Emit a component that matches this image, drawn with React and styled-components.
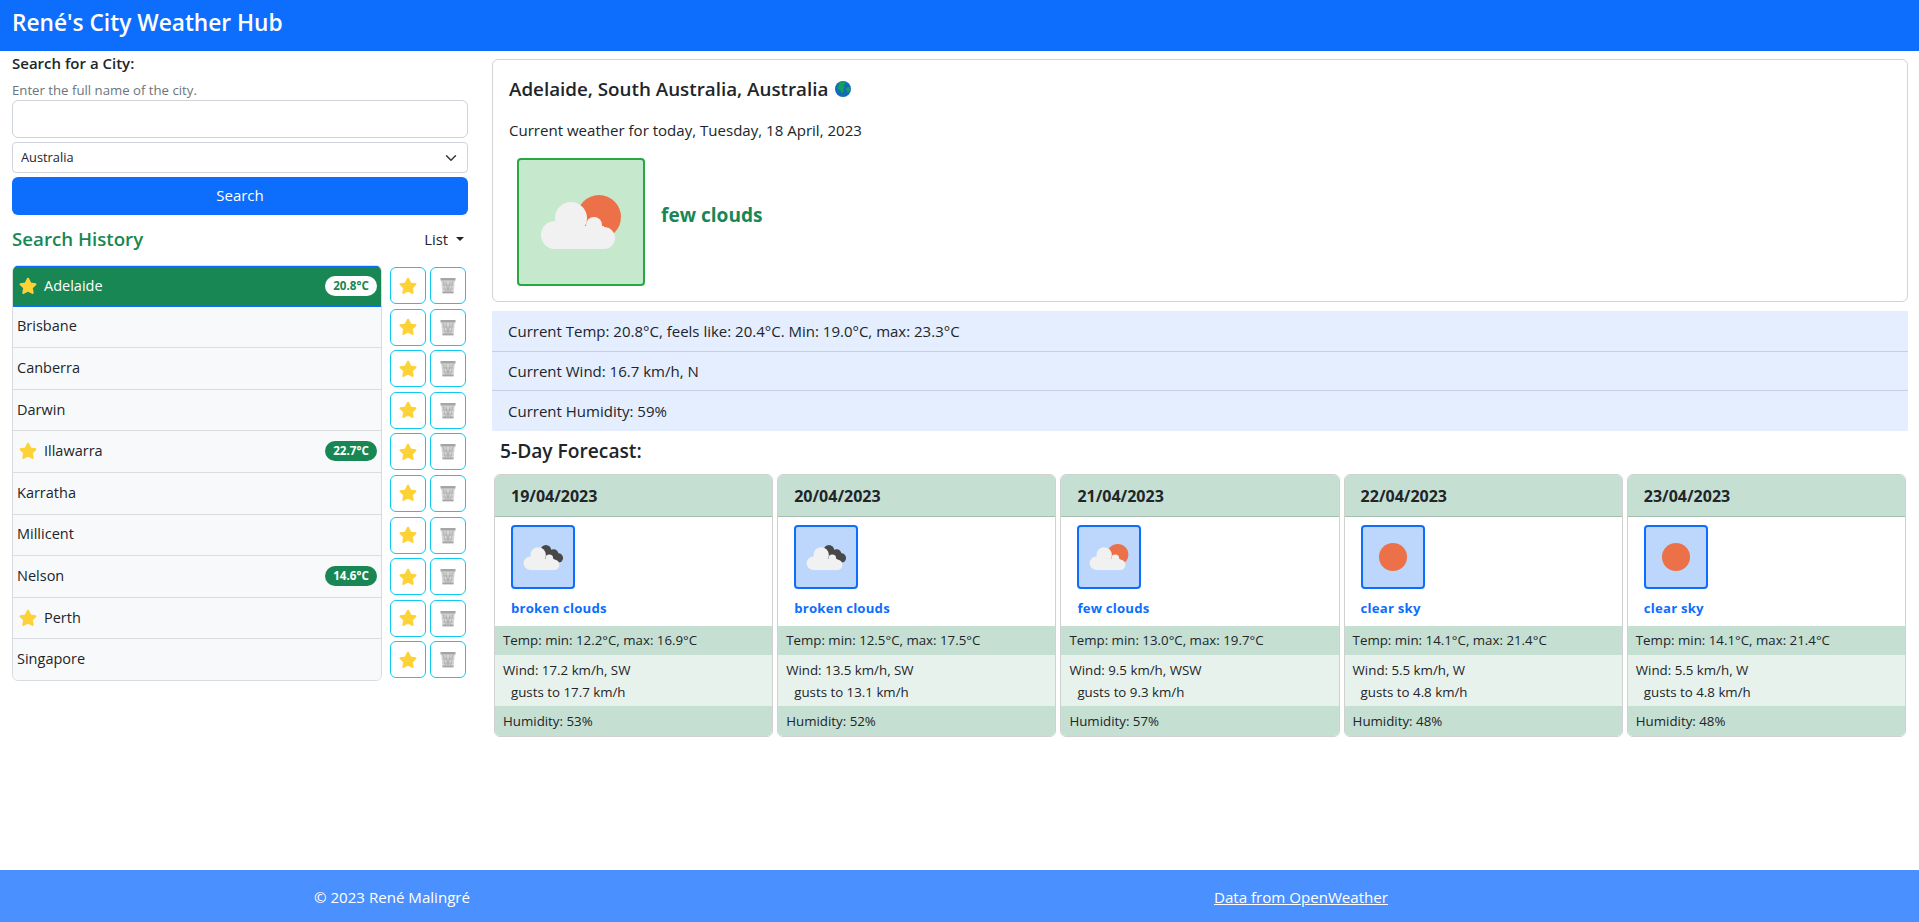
import styled, { createGlobalStyle } from 'styled-components';

const GlobalStyle = createGlobalStyle`
  html, body {
    margin: 0;
    padding: 0;
    background: #fff;
    color: #212529;
    font-family: "Open Sans", "Noto Sans", "Liberation Sans", sans-serif;
    font-size: 16px;
    line-height: 24px;
  }
  * { box-sizing: border-box; }
`;

const Page = styled.div`
  height: 922px;
  display: flex;
  flex-direction: column;
  overflow: hidden;
`;

const Header = styled.header`
  height: 51px;
  flex: none;
  background: #0d6efd;
  color: #fff;
  padding: 0 12px 5px;
  display: flex;
  align-items: center;
  font-size: 22.7px;
  font-weight: 600;
`;

const Main = styled.main`
  flex: 1;
  display: grid;
  grid-template-columns: 480px 1439px;
`;

const Sidebar = styled.section`
  padding: 0 12px;
`;

const FieldLabel = styled.div`
  font-size: 15px;
  font-weight: 600;
`;

const Hint = styled.div`
  margin-top: 5px;
  height: 20px;
  line-height: 20px;
  font-size: 13.2px;
  color: #6c757d;
`;

const CityInput = styled.input`
  display: block;
  width: 100%;
  height: 38px;
  border: 1px solid #ced4da;
  border-radius: 6px;
  background: #fff;
`;

const CountrySelect = styled.select`
  display: block;
  width: 100%;
  height: 31px;
  margin-top: 4px;
  padding: 0 36px 2px 8px;
  border: 1px solid #ced4da;
  border-radius: 4px;
  appearance: none;
  color: #212529;
  font-family: inherit;
  font-size: 12.8px;
  background: #fff url("data:image/svg+xml,%3csvg xmlns='http://www.w3.org/2000/svg' viewBox='0 0 16 16'%3e%3cpath fill='none' stroke='%23343a40' stroke-linecap='round' stroke-linejoin='round' stroke-width='2' d='m2 5 6 6 6-6'/%3e%3c/svg%3e") no-repeat right 8px center / 16px 12px;
`;

const SearchButton = styled.button`
  display: block;
  width: 100%;
  height: 38px;
  margin-top: 4px;
  padding: 0 0 2px;
  border: none;
  border-radius: 6px;
  background: #0d6efd;
  color: #fff;
  font-family: inherit;
  font-size: 15px;
`;

const HistoryBar = styled.div`
  margin-top: 12px;
  height: 24px;
  display: flex;
  align-items: center;
  justify-content: space-between;
`;

const HistoryTitle = styled.h2`
  margin: 0;
  color: #198754;
  font-size: 18.7px;
  font-weight: 600;
`;

const ListToggle = styled.div`
  display: flex;
  align-items: center;
  gap: 8px;
  padding-right: 4px;
  font-size: 14.8px;
  &::after {
    content: '';
    border-top: 4.8px solid #212529;
    border-left: 4.8px solid transparent;
    border-right: 4.8px solid transparent;
  }
`;

const HistoryGrid = styled.div`
  margin-top: 14px;
  display: grid;
  grid-template-columns: 370px 76px;
  column-gap: 8px;
  align-items: start;
`;

const CityList = styled.div`
  border: 1px solid #d9dcdf;
  border-radius: 6px;
  overflow: hidden;
`;

const CityRow = styled.div`
  height: 41.6px;
  display: flex;
  align-items: center;
  justify-content: space-between;
  padding: 0 4px 1px;
  font-size: 14.5px;
  background: ${({ $active }) => ($active ? '#198754' : '#f8f9fa')};
  color: ${({ $active }) => ($active ? '#fff' : '#212529')};
  border-top: ${({ $active }) => ($active ? '1px solid #0d6efd' : 'none')};
  border-bottom: 1px solid ${({ $active }) => ($active ? '#0d6efd' : '#dadde0')};
  &:first-child {
    height: 40.6px;
  }
  &:last-child {
    height: 40.6px;
    border-bottom: none;
  }
`;

const CityName = styled.span`
  display: flex;
  align-items: center;
  gap: 6px;
  padding-left: ${({ $starred }) => ($starred ? '1px' : '0')};
`;

const TempBadge = styled.span`
  height: 20px;
  width: 52px;
  display: flex;
  align-items: center;
  justify-content: center;
  border-radius: 10px;
  font-size: 11.6px;
  font-weight: 700;
  background: ${({ $active }) => ($active ? '#fff' : '#198754')};
  color: ${({ $active }) => ($active ? '#198754' : '#fff')};
`;

const ActionColumn = styled.div`
  display: flex;
  flex-direction: column;
`;

const ActionRow = styled.div`
  height: 41.6px;
  display: flex;
  gap: 4px;
  padding-top: 2px;
`;

const ActionButton = styled.button`
  width: 36px;
  height: 37px;
  padding: 0;
  display: flex;
  align-items: center;
  justify-content: center;
  border: 1px solid #0dcaf0;
  border-radius: 6px;
  background: #fff;
`;

const Content = styled.section`
  padding: 8px 11px 0 12px;
`;

const CurrentCard = styled.div`
  height: 243px;
  border: 1px solid #d3d4d5;
  border-radius: 6px;
  padding: 17px 16px 0;
`;

const CityTitle = styled.h1`
  margin: 0;
  display: flex;
  align-items: center;
  gap: 7px;
  font-size: 18.8px;
  font-weight: 600;
`;

const Subtitle = styled.p`
  margin: 17px 0 0;
  font-size: 15.05px;
`;

const ConditionRow = styled.div`
  margin: 16px 0 0 8px;
  display: flex;
  align-items: center;
  gap: 16px;
`;

const IconBox = styled.div`
  flex: none;
  width: ${({ $size }) => $size}px;
  height: ${({ $size }) => $size}px;
  border: 2px solid ${({ $variant }) => ($variant === 'success' ? '#28a745' : '#0d6efd')};
  border-radius: 4px;
  background: ${({ $variant }) => ($variant === 'success' ? '#c6e8cd' : '#bdd6fc')};
  svg {
    display: block;
    width: 100%;
    height: 100%;
  }
`;

const ConditionLabel = styled.div`
  margin-bottom: 15px;
  font-size: 19.1px;
  font-weight: 700;
  color: #198754;
`;

const StatsList = styled.div`
  margin-top: 9px;
  background: #e4eefe;
`;

const StatRow = styled.div`
  height: ${({ $height }) => $height}px;
  display: flex;
  align-items: center;
  padding: 0 16px;
  font-size: 15px;
  & + & {
    border-top: 1px solid #c6d0e2;
  }
`;

const ForecastTitle = styled.h3`
  margin: 8px 0 0 8px;
  height: 24px;
  font-size: 19.2px;
  font-weight: 600;
`;

const ForecastGrid = styled.div`
  margin-top: 11px;
  display: grid;
  grid-template-columns: repeat(5, 1fr);
`;

const DayCard = styled.article`
  margin: 0 2px;
  height: 263px;
  display: flex;
  flex-direction: column;
  border: 1px solid #cfd2d1;
  border-radius: 6px;
  overflow: hidden;
`;

const DayHeader = styled.div`
  height: 42px;
  flex: none;
  display: flex;
  align-items: center;
  padding-left: 16px;
  font-size: 16px;
  font-weight: 700;
  background: #c5e0d3;
  border-bottom: 1px solid #a6bdb2;
`;

const DayBody = styled.div`
  height: 109px;
  flex: none;
  padding: 8px 16px 0;
`;

const DayCondition = styled.div`
  margin-top: 7px;
  font-size: 13.2px;
  font-weight: 700;
  letter-spacing: 0.2px;
  color: #0d6efd;
`;

const DayStat = styled.div`
  height: ${({ $height }) => $height}px;
  display: flex;
  flex-direction: column;
  justify-content: center;
  padding: 0 8px ${({ $lift }) => ($lift ? '2px' : '0')};
  font-size: 13.3px;
  line-height: 22px;
  background: ${({ $light }) => ($light ? '#e8f2ec' : '#c5e0d3')};
`;

const Gusts = styled.div`
  padding-left: 8px;
`;

const Footer = styled.footer`
  height: 52px;
  flex: none;
  display: grid;
  grid-template-columns: 784px 1034px;
  align-items: center;
  padding-top: 1px;
  text-align: center;
  background: #4a90ff;
  color: #fff;
  font-size: 15.1px;
`;

const FooterLink = styled.a`
  color: #fff;
  text-decoration: underline;
`;

const StarIcon = () => (
  <svg width="20" height="20" viewBox="0 0 24 24">
    <path
      d="M12 3.4l2.8 5.6 6.1.9-4.4 4.3 1 6.1-5.5-2.9-5.5 2.9 1-6.1-4.4-4.3 6.1-.9z"
      fill="#fdd237"
      stroke="#fdd237"
      strokeWidth="2.6"
      strokeLinejoin="round"
    />
  </svg>
);

const TrashIcon = () => (
  <svg width="16" height="17" viewBox="0 0 16 17">
    <path d="M1.2 3.5h13.6l-1.2 12.5H2.4z" fill="#d6d6d6" />
    <path
      d="M3 4l2.5 11M6 4l2 11M10 4l-2 11M13 4l-2.5 11M13 4L5 15M3 4l8 11M2.5 8h11M3 12h10"
      stroke="#adadad"
      strokeWidth="0.7"
      fill="none"
    />
    <rect x="0.5" y="1" width="15" height="2.6" fill="#a5a5a5" />
    <rect x="2.5" y="14.6" width="11" height="1.8" fill="#a5a5a5" />
  </svg>
);

const GlobeIcon = () => (
  <svg width="16" height="16" viewBox="0 0 16 16">
    <circle cx="8" cy="8" r="8" fill="#0f6cb8" />
    <path
      d="M4 1.6C6 .5 9 .4 10.5 1L10 3.2 8.4 4.5 9.5 6 8.3 8 8.6 11 7 12.5 6 9.8 3.2 8.6 2 6.2 3.6 5z"
      fill="#12a05c"
    />
    <path d="M11 7l3-1 1.3 2.5-2 3-1.6-1.2z" fill="#12a05c" />
  </svg>
);

const Cloud = () => (
  <g fill="#f1f1f1">
    <circle cx="54" cy="60" r="16" />
    <circle cx="38" cy="77" r="14" />
    <circle cx="77" cy="67" r="8" />
    <circle cx="87" cy="80" r="11" />
    <rect x="38" y="68" width="49" height="23" />
  </g>
);

const WeatherIcon = ({ type }) => (
  <svg viewBox="0 0 124 124">
    <g transform="translate(-2 -2)">
      {type === 'clear' && <circle cx="64" cy="64" r="29" fill="#ec7148" />}
      {type === 'few' && <circle cx="82" cy="59" r="22" fill="#ec7148" />}
      {type === 'broken' && (
        <g fill="#484848">
          <circle cx="70" cy="50" r="11" />
          <circle cx="86" cy="58" r="10" />
          <circle cx="96" cy="66" r="9.5" />
          <rect x="66" y="52" width="20" height="16" />
        </g>
      )}
      {type !== 'clear' && <Cloud />}
    </g>
  </svg>
);

const cities = [
  { name: 'Adelaide', starred: true, temp: '20.8°C', active: true },
  { name: 'Brisbane' },
  { name: 'Canberra' },
  { name: 'Darwin' },
  { name: 'Illawarra', starred: true, temp: '22.7°C' },
  { name: 'Karratha' },
  { name: 'Millicent' },
  { name: 'Nelson', temp: '14.6°C' },
  { name: 'Perth', starred: true },
  { name: 'Singapore' },
];

const forecast = [
  { date: '19/04/2023', icon: 'broken', text: 'broken clouds', temp: 'Temp: min: 12.2°C, max: 16.9°C', wind: 'Wind: 17.2 km/h, SW', gusts: 'gusts to 17.7 km/h', humidity: 'Humidity: 53%' },
  { date: '20/04/2023', icon: 'broken', text: 'broken clouds', temp: 'Temp: min: 12.5°C, max: 17.5°C', wind: 'Wind: 13.5 km/h, SW', gusts: 'gusts to 13.1 km/h', humidity: 'Humidity: 52%' },
  { date: '21/04/2023', icon: 'few', text: 'few clouds', temp: 'Temp: min: 13.0°C, max: 19.7°C', wind: 'Wind: 9.5 km/h, WSW', gusts: 'gusts to 9.3 km/h', humidity: 'Humidity: 57%' },
  { date: '22/04/2023', icon: 'clear', text: 'clear sky', temp: 'Temp: min: 14.1°C, max: 21.4°C', wind: 'Wind: 5.5 km/h, W', gusts: 'gusts to 4.8 km/h', humidity: 'Humidity: 48%' },
  { date: '23/04/2023', icon: 'clear', text: 'clear sky', temp: 'Temp: min: 14.1°C, max: 21.4°C', wind: 'Wind: 5.5 km/h, W', gusts: 'gusts to 4.8 km/h', humidity: 'Humidity: 48%' },
];

const App = () => (
  <Page>
    <GlobalStyle />
    <Header>René's City Weather Hub</Header>
    <Main>
      <Sidebar>
        <FieldLabel>Search for a City:</FieldLabel>
        <Hint>Enter the full name of the city.</Hint>
        <CityInput type="text" aria-label="City" />
        <CountrySelect defaultValue="Australia" aria-label="Country">
          <option>Australia</option>
        </CountrySelect>
        <SearchButton>Search</SearchButton>
        <HistoryBar>
          <HistoryTitle>Search History</HistoryTitle>
          <ListToggle>List</ListToggle>
        </HistoryBar>
        <HistoryGrid>
          <CityList>
            {cities.map((city) => (
              <CityRow key={city.name} $active={city.active}>
                <CityName $starred={city.starred}>
                  {city.starred && <StarIcon />}
                  {city.name}
                </CityName>
                {city.temp && <TempBadge $active={city.active}>{city.temp}</TempBadge>}
              </CityRow>
            ))}
          </CityList>
          <ActionColumn>
            {cities.map((city) => (
              <ActionRow key={city.name}>
                <ActionButton aria-label="Favourite"><StarIcon /></ActionButton>
                <ActionButton aria-label="Delete"><TrashIcon /></ActionButton>
              </ActionRow>
            ))}
          </ActionColumn>
        </HistoryGrid>
      </Sidebar>
      <Content>
        <CurrentCard>
          <CityTitle>
            Adelaide, South Australia, Australia
            <GlobeIcon />
          </CityTitle>
          <Subtitle>Current weather for today, Tuesday, 18 April, 2023</Subtitle>
          <ConditionRow>
            <IconBox $size={128} $variant="success"><WeatherIcon type="few" /></IconBox>
            <ConditionLabel>few clouds</ConditionLabel>
          </ConditionRow>
        </CurrentCard>
        <StatsList>
          <StatRow $height={39.5}>Current Temp: 20.8°C, feels like: 20.4°C. Min: 19.0°C, max: 23.3°C</StatRow>
          <StatRow $height={39.5}>Current Wind: 16.7 km/h, N</StatRow>
          <StatRow $height={41}>Current Humidity: 59%</StatRow>
        </StatsList>
        <ForecastTitle>5-Day Forecast:</ForecastTitle>
        <ForecastGrid>
          {forecast.map((day) => (
            <DayCard key={day.date}>
              <DayHeader>{day.date}</DayHeader>
              <DayBody>
                <IconBox $size={64}><WeatherIcon type={day.icon} /></IconBox>
                <DayCondition>{day.text}</DayCondition>
              </DayBody>
              <DayStat $height={30} $lift>{day.temp}</DayStat>
              <DayStat $height={51} $light>
                {day.wind}
                <Gusts>{day.gusts}</Gusts>
              </DayStat>
              <DayStat $height={31}>{day.humidity}</DayStat>
            </DayCard>
          ))}
        </ForecastGrid>
      </Content>
    </Main>
    <Footer>
      <span>© 2023 René Malingré</span>
      <FooterLink href="#">Data from OpenWeather</FooterLink>
    </Footer>
  </Page>
);

export default App;
